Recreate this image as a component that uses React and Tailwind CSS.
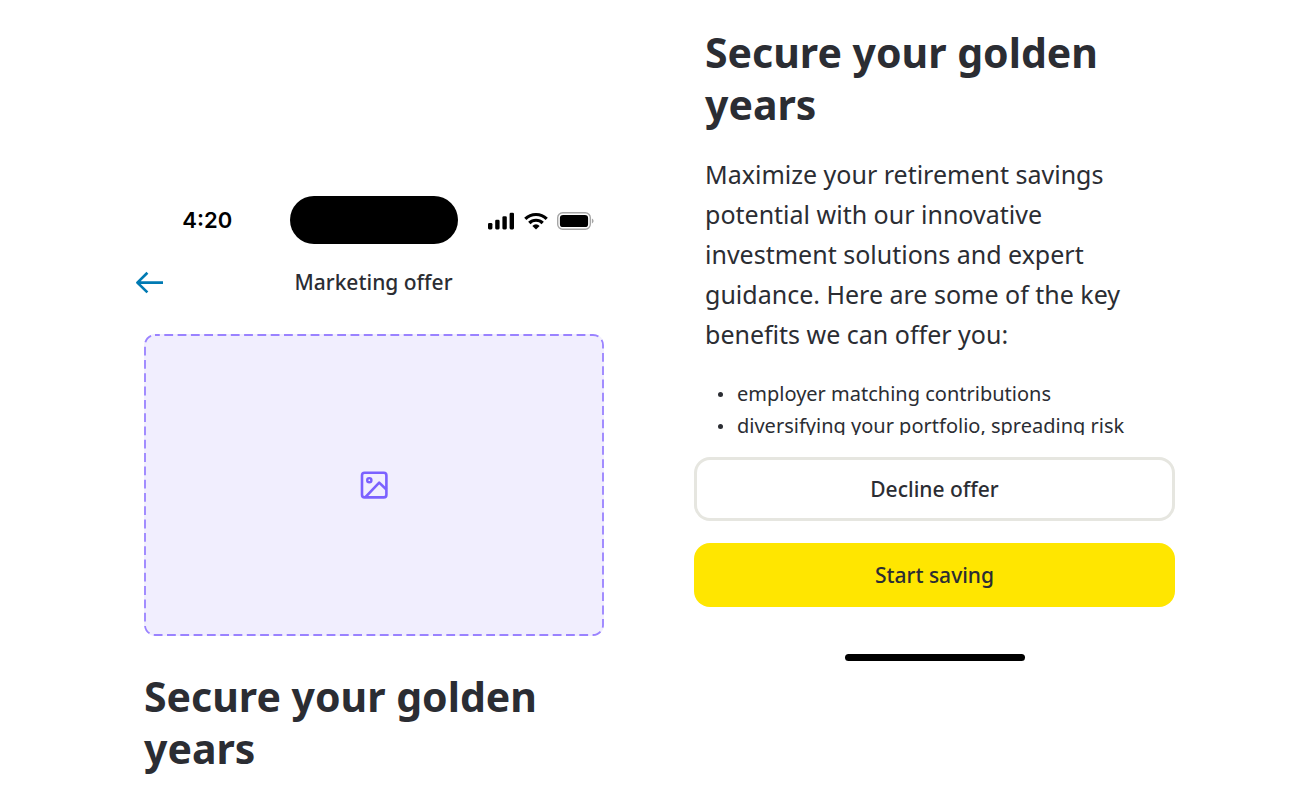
function SignalIcon() {
  return (
    <svg width="27" height="18" viewBox="0 0 27 18" aria-hidden="true">
      <rect x="0" y="11" width="4.4" height="6.4" rx="1.3" />
      <rect x="7.2" y="7.8" width="4.4" height="9.6" rx="1.3" />
      <rect x="14.4" y="4.2" width="4.4" height="13.2" rx="1.3" />
      <rect x="21.6" y="0.8" width="4.4" height="16.6" rx="1.3" />
    </svg>
  );
}

function WifiIcon() {
  return (
    <svg width="24" height="18" viewBox="0 0 24 18" aria-hidden="true">
      <g fill="none" stroke="#000" strokeWidth="3.2">
        <path d="M1.3 6.9a15.2 15.2 0 0 1 21.4 0" />
        <path d="M5.3 11a9.5 9.5 0 0 1 13.4 0" />
      </g>
      <path d="M12 17.6l-3.6-3.7a5 5 0 0 1 7.2 0z" />
    </svg>
  );
}

function BatteryIcon() {
  return (
    <svg width="37" height="18" viewBox="0 0 37 18" aria-hidden="true">
      <rect x="0.7" y="0.7" width="32.6" height="16.6" rx="5" fill="none" stroke="#a6a6a6" strokeWidth="1.4" />
      <rect x="2.9" y="2.9" width="28.2" height="12.2" rx="3.2" />
      <path d="M34.9 6.6c2.2 1 2.2 3.8 0 4.8z" fill="#a6a6a6" />
    </svg>
  );
}

function ArrowIcon() {
  return (
    <svg width="30" height="24" viewBox="0 0 30 24" fill="none" stroke="#007ab3" strokeWidth="2.7" aria-hidden="true">
      <path d="M30 12.6H4M14.4 2.8l-10 9.8 10 9.8" strokeLinejoin="round" />
    </svg>
  );
}

function ImageIcon() {
  return (
    <svg width="28" height="28" viewBox="0 0 28 28" fill="none" stroke="#7b61ff" strokeWidth="2.6" aria-hidden="true">
      <rect x="2" y="1.8" width="24.4" height="24.6" rx="2.6" />
      <circle cx="9.3" cy="9.2" r="2.1" strokeWidth="2.4" />
      <path d="M5.4 26.2L19.2 11.6l7.2 6.9" strokeLinejoin="round" />
    </svg>
  );
}

function StatusBar() {
  return (
    <div className="grid grid-cols-[1fr_168px_1fr] items-center">
      <span className="pr-2 text-center font-['Inter'] text-[22px] font-semibold text-black">4:20</span>
      <div className="h-12 rounded-full bg-black" />
      <div className="flex items-center gap-[9px] pt-px pl-[30px]">
        <SignalIcon />
        <WifiIcon />
        <BatteryIcon />
      </div>
    </div>
  );
}

function ImagePlaceholder() {
  return (
    <div className="relative flex h-[302px] items-center justify-center rounded-[11px] bg-[#f1eefe]">
      <div className="absolute inset-px">
        <svg className="h-full w-full overflow-visible" aria-hidden="true">
          <rect
            width="100%"
            height="100%"
            rx="10"
            fill="none"
            stroke="#9a82ff"
            strokeWidth="1.8"
            strokeDasharray="8.8 4.5"
            strokeDashoffset="4"
          />
        </svg>
      </div>
      <ImageIcon />
    </div>
  );
}

function OfferHeading() {
  return <h1 className="text-[41px] leading-[52px] font-bold">Secure your golden years</h1>;
}

const benefits = ["employer matching contributions", "diversifying your portfolio, spreading risk"];

export default function App() {
  return (
    <main className="grid grid-cols-2 gap-20 bg-white pr-[137px] pl-[133px] font-['Noto_Sans',sans-serif] text-[#2b2d33]">
      <section className="pt-[196px]">
        <StatusBar />
        <header className="mt-[22px] grid grid-cols-[30px_1fr_30px] items-center">
          <button type="button" aria-label="Back">
            <ArrowIcon />
          </button>
          <h2 className="text-center text-[21px] leading-8 font-medium">Marketing offer</h2>
        </header>
        <div className="mt-9 pr-[10px] pl-[11px]">
          <ImagePlaceholder />
          <div className="mt-[34px]">
            <OfferHeading />
          </div>
        </div>
      </section>

      <section>
        <div className="h-[435px] overflow-hidden px-[11px] pt-[26px]">
          <OfferHeading />
          <p className="mt-6 text-[25px] leading-10">
            Maximize your retirement savings potential with our innovative investment solutions and expert guidance.
            Here are some of the key benefits we can offer you:
          </p>
          <ul className="mt-6 text-[20px] leading-8">
            {benefits.map((b) => (
              <li key={b} className="flex items-center">
                <span className="mr-[14px] ml-[13px] size-[5px] rounded-full bg-[#2b2d33]" />
                <span className="whitespace-nowrap">{b}</span>
              </li>
            ))}
          </ul>
        </div>
        <div className="mt-[22px] flex flex-col gap-[22px] text-[21px] font-medium">
          <button type="button" className="h-16 rounded-2xl border-[3px] border-[#e6e6e0] pt-[2px]">
            Decline offer
          </button>
          <button type="button" className="h-16 rounded-2xl bg-[#ffe600] pt-[2px]">
            Start saving
          </button>
        </div>
        <div className="mx-auto mt-[47px] h-[7px] w-[180px] rounded-full bg-black" />
      </section>
    </main>
  );
}
